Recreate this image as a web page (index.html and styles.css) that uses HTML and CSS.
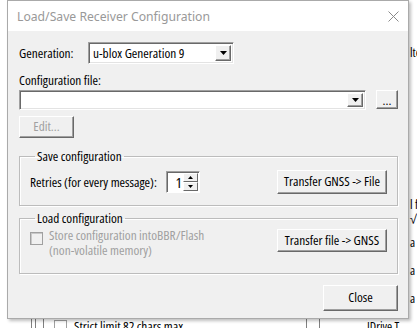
FILE: index.html
```html
<!DOCTYPE html>
<html>
<head>
<meta charset="utf-8">
<link rel="stylesheet" href="styles.css">
</head>
<body>
<div class="desk">
  <div class="behind">
    <span class="frag f1">lte</span>
    <span class="frag f2">l f</span>
    <span class="frag f3">√ l</span>
    <span class="frag f4">a</span>
    <span class="frag f5">a</span>
    <span class="frag f6">a</span>
    <span class="frag f7 dim">emember</span>
    <span class="frag f8">IDrive T</span>
    <div class="strip">
      <span class="vl"></span><span class="vl"></span><span class="vl gap"></span>
      <span class="cb small"></span>
      <span class="striptext">Strict limit 82 chars max</span>
      <span class="vl far"></span><span class="vl"></span>
    </div>
  </div>

  <div class="dialog">
    <div class="titlebar">
      <span class="title">Load/Save Receiver Configuration</span>
      <svg class="close" width="11" height="11" viewBox="0 0 11 11"><path d="M0.5 0.5L10.5 10.5M10.5 0.5L0.5 10.5" stroke="#8a8a8a" stroke-width="1" fill="none"/></svg>
    </div>
    <div class="body">
      <div class="genrow">
        <span class="lbl">Generation:</span>
        <div class="select gen">
          <span class="val">u-blox Generation 9</span>
          <span class="drop"><svg width="7" height="4" viewBox="0 0 7 4"><path d="M0 0H7L3.5 4Z" fill="#000"/></svg></span>
        </div>
      </div>
      <div class="lbl cfglbl">Configuration file:</div>
      <div class="cfgrow">
        <div class="select cfg">
          <span class="val"></span>
          <span class="drop"><svg width="7" height="4" viewBox="0 0 7 4"><path d="M0 0H7L3.5 4Z" fill="#000"/></svg></span>
        </div>
        <button class="btn dots">...</button>
      </div>
      <button class="btn edit" disabled>Edit...</button>

      <fieldset class="group save">
        <legend>Save configuration</legend>
        <div class="grow">
          <span class="lbl">Retries (for every message):</span>
          <div class="spin">
            <span class="num">1</span>
            <span class="arrows">
              <span class="ab"><svg width="5" height="3" viewBox="0 0 5 3"><path d="M0 3H5L2.5 0Z" fill="#000"/></svg></span>
              <span class="ab"><svg width="5" height="3" viewBox="0 0 5 3"><path d="M0 0H5L2.5 3Z" fill="#000"/></svg></span>
            </span>
          </div>
          <button class="btn xfer">Transfer GNSS -&gt; File</button>
        </div>
      </fieldset>

      <fieldset class="group load">
        <legend>Load configuration</legend>
        <div class="grow">
          <div class="chk">
            <span class="cb"></span>
            <span class="chktext"><span class="ln">Store configuration intoBBR/Flash</span><span class="ln">(non-volatile memory)</span></span>
          </div>
          <button class="btn xfer">Transfer file -&gt; GNSS</button>
        </div>
      </fieldset>

      <div class="foot">
        <button class="btn closebtn">Close</button>
      </div>
    </div>
  </div>
</div>
</body>
</html>
```

FILE: styles.css
```css
* { box-sizing: border-box; }
html, body { margin: 0; padding: 0; }
body {
  width: 417px; height: 328px; overflow: hidden; background: #fff;
  font-family: "Open Sans", "DejaVu Sans Condensed", sans-serif;
  font-stretch: 75%;
  font-size: 13.3px; color: #000;
}
.desk { position: relative; width: 417px; height: 328px; }

.behind { position: absolute; inset: 0; }
.frag { position: absolute; left: 410px; line-height: 12px; font-size: 12.5px; white-space: nowrap; }
.f1 { top: 47px; }
.f2 { top: 199px; }
.f3 { top: 214px; }
.f4 { top: 237px; }
.f5 { top: 265px; }
.f6 { top: 293px; }
.f7 { top: 308px; left: 367px; }
.f8 { top: 321px; left: 367px; }
.dim { color: #b0b0b0; }
.strip { position: absolute; left: 31px; top: 318px; height: 12px; display: flex; align-items: flex-start; }
.vl { width: 1px; height: 12px; background: #808080; margin-right: 3px; }
.vl.gap { margin-left: 4px; margin-right: 10px; }
.vl.far { margin-left: 123px; margin-right: 12px; }
.cb { width: 13px; height: 13px; border: 1px solid #a0a0a0; background: #fff; display: block; }
.cb.small { margin-top: 2px; }
.striptext { margin-left: 7px; line-height: 13px; margin-top: 2px; white-space: nowrap; }

.dialog {
  position: absolute; left: 7px; top: 0; width: 402px; height: 319px;
  background: #f0f0f0; border: 1px solid #aaaaaa;
  box-shadow: 2px 2px 3px rgba(0,0,0,0.25);
  display: flex; flex-direction: column;
}
.titlebar {
  height: 30px; background: #fff; display: flex; align-items: center;
  justify-content: space-between; padding: 0 9px 0 9px;
}
.title { font-family: "Noto Sans", "Open Sans", sans-serif; font-stretch: 100%; font-size: 12.2px; color: #999; }

.body { flex: 1; padding: 0 10px 0 11px; display: flex; flex-direction: column; }
.lbl { white-space: nowrap; }
.genrow { display: flex; align-items: center; margin-top: 11px; height: 22px; }
.genrow .lbl { width: 69px; }

.select {
  display: flex; background: #fff; height: 22px;
  border: 1px solid; border-color: #a0a0a0 #fff #fff #a0a0a0;
  box-shadow: inset 1px 1px 0 #696969, inset -1px -1px 0 #e3e3e3;
  padding: 2px; align-items: stretch;
}
.select .val { flex: 1; padding-left: 2px; line-height: 16px; white-space: nowrap; }
.gen { width: 146px; }
.drop {
  width: 16px; background: #f0f0f0; display: flex; align-items: center; justify-content: center;
  border: 1px solid; border-color: #fff #696969 #696969 #fff;
  box-shadow: inset -1px -1px 0 #a0a0a0;
}
.cfglbl { margin-top: 9px; line-height: 15px; }
.cfgrow { display: flex; align-items: flex-start; margin-top: 2px; }
.cfg { width: 347px; height: 20px; }

.btn {
  font: inherit; color: #000; background: #f0f0f0;
  border: 1px solid; border-color: #fff #696969 #696969 #fff;
  box-shadow: inset -1px -1px 0 #a0a0a0;
  padding: 0; margin: 0; line-height: 1; white-space: nowrap;
}
.dots { width: 22px; height: 19px; margin-left: 10px; line-height: 12px; }
.edit { width: 55px; height: 22px; margin-top: 6px; color: #a0a0a0; }

.group {
  margin: 0; padding: 0 10px;
  border: 1px solid #bcbcbc; box-shadow: 1px 1px 0 #fff, inset 1px 1px 0 #fff;
}
.group legend { padding: 0 2px; margin-left: 5px; line-height: 15px; }
.save { margin-top: 11px; height: 57px; }
.load { margin-top: 5px; height: 63px; }
.grow { display: flex; align-items: center; justify-content: space-between; }
.save .grow { margin-top: 6px; }
.save .lbl { margin-right: 9px; }
.spin {
  display: flex; width: 34px; height: 22px; background: #fff;
  border: 1px solid; border-color: #a0a0a0 #fff #fff #a0a0a0;
  box-shadow: inset 1px 1px 0 #696969;
  padding: 1px 1px 1px 2px; margin-right: auto;
}
.num { flex: 1; text-align: right; padding-right: 1px; line-height: 19px; font-size: 15px; }
.arrows { display: flex; flex-direction: column; width: 15px; }
.ab {
  flex: 1; background: #f0f0f0; display: flex; align-items: center; justify-content: center;
  border: 1px solid; border-color: #fff #696969 #696969 #fff;
}
.xfer { width: 110px; height: 24px; }
.load .grow { margin-top: 2px; align-items: flex-start; }
.chk { display: flex; align-items: flex-start; color: #a0a0a0; }
.chk .cb { margin-top: 4px; background: #f0f0f0; box-shadow: inset 1px 1px 0 #c8c8c8; }
.chktext { margin-left: 6px; display: flex; flex-direction: column; }
.ln { display: block; height: 15px; line-height: 15px; white-space: nowrap; }
.load .xfer { margin-top: 1px; height: 23px; }
.foot { display: flex; justify-content: flex-end; margin-top: 11px; }
.closebtn { width: 75px; height: 26px; }
```
